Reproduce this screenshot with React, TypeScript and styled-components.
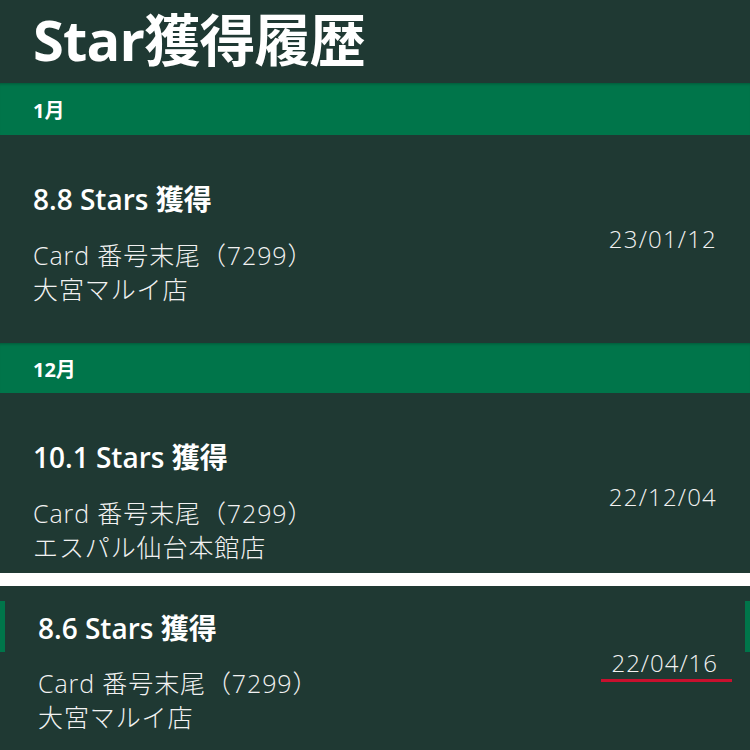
import styled, { createGlobalStyle } from "styled-components";

const GlobalStyle = createGlobalStyle`
  html, body {
    margin: 0;
    padding: 0;
    background: #1f3933;
  }
  body {
    font-family: "Open Sans", "Noto Sans CJK JP", sans-serif;
    color: #ffffff;
    overflow: hidden;
  }
`;

interface Entry {
  stars: string;
  store: string;
  date: string;
}

const Page = () => {
  const jan: Entry = { stars: "8.8", store: "大宮マルイ店", date: "23/01/12" };
  const dec: Entry = {
    stars: "10.1",
    store: "エスパル仙台本館店",
    date: "22/12/04",
  };
  const picked: Entry = { stars: "8.6", store: "大宮マルイ店", date: "22/04/16" };

  return (
    <Screen>
      <Header>
        <h1>Star獲得履歴</h1>
      </Header>

      <MonthBand $top={52}>1月</MonthBand>
      <Row $bottom={37}>
        <Info>
          <Title>{jan.stars} Stars 獲得</Title>
          <Line>Card 番号末尾（7299）</Line>
          <Line>{jan.store}</Line>
        </Info>
        <DateText>{jan.date}</DateText>
      </Row>

      <MonthBand $top={50}>12月</MonthBand>
      <Row $bottom={9}>
        <Info>
          <Title>{dec.stars} Stars 獲得</Title>
          <Line>Card 番号末尾（7299）</Line>
          <Line>{dec.store}</Line>
        </Info>
        <DateText>{dec.date}</DateText>
      </Row>

      <Divider />

      <PickedCard>
        <SideMark $side="left" />
        <SideMark $side="right" />
        <Info>
          <Title>{picked.stars} Stars 獲得</Title>
          <Line>Card 番号末尾（7299）</Line>
          <Line>{picked.store}</Line>
        </Info>
        <MarkedDate>{picked.date}</MarkedDate>
      </PickedCard>
    </Screen>
  );
};

export default function App() {
  return (
    <>
      <GlobalStyle />
      <Page />
    </>
  );
}

const Screen = styled.div`
  width: 750px;
  height: 750px;
  overflow: hidden;
  background: #1f3933;
  display: flex;
  flex-direction: column;
`;

const Header = styled.header`
  height: 83px;
  padding-left: 33px;
  display: flex;
  align-items: center;
  flex-shrink: 0;
  h1 {
    margin: 0;
    font-size: 56px;
    font-weight: 700;
    line-height: 1;
    letter-spacing: -0.8px;
    color: #ffffff;
    transform: translateY(-3px);
  }
`;

const MonthBand = styled.div<{ $top: number }>`
  height: ${(p) => p.$top}px;
  flex-shrink: 0;
  background: #00754a;
  box-shadow: inset 0 3px 3px -2px rgba(0, 0, 0, 0.25);
  padding-left: 33px;
  display: flex;
  align-items: center;
  font-size: 20px;
  font-weight: 700;
  color: #ffffff;
`;

const Row = styled.div<{ $bottom: number }>`
  display: flex;
  justify-content: space-between;
  align-items: center;
  padding: 49px 33px ${(p) => p.$bottom}px 33px;
  flex-shrink: 0;
`;

const Info = styled.div`
  display: flex;
  flex-direction: column;
`;

const Title = styled.div`
  font-size: 28px;
  font-weight: 600;
  line-height: 30px;
  color: #ffffff;
  margin-bottom: 24px;
`;

const Line = styled.div`
  font-size: 25px;
  font-weight: 300;
  line-height: 34px;
  letter-spacing: 0.9px;
  color: #f2f2f2;
`;

const DateText = styled.div`
  font-size: 24px;
  font-weight: 300;
  line-height: 34px;
  letter-spacing: 1.2px;
  color: #f2f2f2;
  margin-bottom: 12px;
`;

const Divider = styled.div`
  height: 13px;
  flex-shrink: 0;
  background: #ffffff;
`;

const PickedCard = styled.div`
  position: relative;
  display: flex;
  justify-content: space-between;
  align-items: center;
  padding: 27px 18px 40px 38px;
  flex-shrink: 0;
  ${Title} {
    margin-bottom: 23px;
  }
`;

const SideMark = styled.span<{ $side: "left" | "right" }>`
  position: absolute;
  top: 15px;
  ${(p) => p.$side}: 0;
  width: 5px;
  height: 51px;
  background: #00754a;
`;

const MarkedDate = styled.div`
  font-size: 24px;
  font-weight: 300;
  line-height: 32px;
  letter-spacing: 1px;
  color: #f2f2f2;
  padding: 0 14px 0 10px;
  border-bottom: 3px solid #c8102e;
  margin-bottom: 18px;
`;
